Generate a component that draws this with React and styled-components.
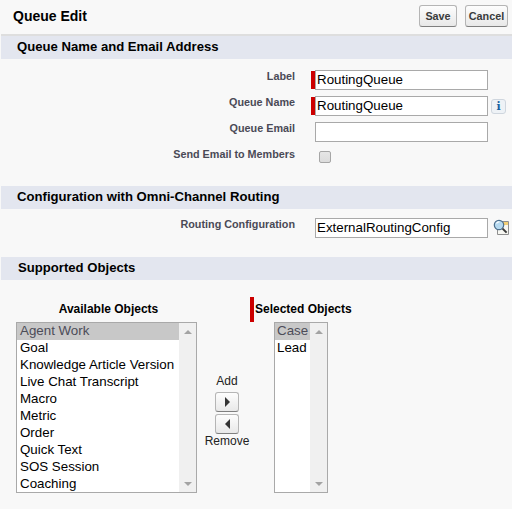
import React from "react";
import styled, { createGlobalStyle } from "styled-components";

const Global = createGlobalStyle`
  html, body { margin: 0; padding: 0; background: #f8f8f8; }
  body { font-family: "Liberation Sans", Arial, sans-serif; }
`;

const Page = styled.div`
  width: 512px;
  height: 509px;
  overflow: hidden;
  box-sizing: border-box;
  padding-left: 1px;
  background: #f8f8f8;
  color: #000;
`;

const TopBar = styled.div`
  height: 34px;
  box-sizing: border-box;
  display: flex;
  align-items: center;
  justify-content: space-between;
  padding: 0 4px 2px 12px;
`;

const Title = styled.h1`
  margin: 0;
  font-size: 14px;
  font-weight: 700;
`;

const Buttons = styled.div`
  display: flex;
  gap: 8px;
`;

const Button = styled.button`
  height: 22px;
  width: ${(p) => p.$w}px;
  box-sizing: border-box;
  padding: 0;
  border: 1px solid #b5b5b5;
  border-bottom-color: #7f7f7f;
  border-radius: 3px;
  background: linear-gradient(#fdfdfd, #e8e8e8);
  font: 700 10.8px "Liberation Sans", Arial, sans-serif;
  color: #3a3b3c;
`;

const Rule = styled.div`
  height: 2px;
  background: #dedede;
`;

const SectionHead = styled.h2`
  margin: 0;
  height: 23px;
  line-height: 22px;
  padding-left: ${(p) => p.$pad || 16}px;
  background: #e3e6ef;
  font-size: 13.13px;
  font-weight: 700;
`;

const Form = styled.div`
  display: grid;
  grid-template-columns: 294px 1fr;
  row-gap: 6px;
  padding: ${(p) => p.$pad};
`;

const Label = styled.label`
  text-align: right;
  font-size: 10.8px;
  font-weight: 700;
  line-height: 12px;
  color: #4a4a56;
`;

const Field = styled.div`
  display: flex;
  align-items: flex-start;
  padding-left: ${(p) => (p.$required ? 16 : 20)}px;
`;

const RequiredBar = styled.span`
  flex: none;
  width: 4px;
  height: 18px;
  margin-top: 1px;
  background: #c00;
`;

const Input = styled.div`
  width: 173px;
  height: 20px;
  box-sizing: border-box;
  border: 1px solid #a9a9a9;
  background: #fff;
  padding-left: 1px;
  font-size: 13.33px;
  line-height: 18px;
  color: #000;
`;

const InfoButton = styled.span`
  width: 15px;
  height: 15px;
  box-sizing: border-box;
  margin: 3px 0 0 3px;
  display: flex;
  align-items: center;
  justify-content: center;
  border: 1px solid #cfd6de;
  border-radius: 3px;
  background: #eef2f6;
  color: #15609f;
  font: 700 11px "DejaVu Serif", serif;
`;

const Check = styled.span`
  width: 12px;
  height: 12px;
  box-sizing: border-box;
  margin: 3px 0 0 4px;
  border: 1px solid #a6a6a6;
  border-radius: 2px;
  background: linear-gradient(#e6e6e6, #dcdcdc);
`;

const Lookup = styled.svg`
  width: 17px;
  height: 16px;
  margin: 1px 0 0 5px;
  flex: none;
`;

const Objects = styled.div`
  display: flex;
  align-items: flex-start;
  padding: 17px 0 0 15px;
`;

const Column = styled.div`
  display: flex;
  flex-direction: column;
`;

const ColHead = styled.div`
  height: 25px;
  box-sizing: border-box;
  font-size: 12px;
  font-weight: 700;
  line-height: 24px;
  padding-left: 4px;
  text-align: center;
`;

const SelectedHead = styled(ColHead)`
  width: 110px;
  margin-left: -24px;
  padding-left: 1px;
  border-left: 4px solid #c00;
  text-align: left;
`;

const ListBox = styled.div`
  width: ${(p) => p.$w}px;
  height: 171px;
  box-sizing: border-box;
  border: 1px solid #a9a9a9;
  background: #fff;
  display: flex;
`;

const Options = styled.div`
  flex: 1;
  min-width: 0;
`;

const Option = styled.div`
  height: 17px;
  line-height: 16px;
  padding-left: ${(p) => p.$inset}px;
  font-size: 13.33px;
  white-space: nowrap;
  background: ${(p) => (p.$selected ? "#c8c8c8" : "transparent")};
  color: ${(p) => (p.$selected ? "#4c4c58" : "#000")};
`;

const ScrollTrack = styled.div`
  flex: none;
  width: 17px;
  box-sizing: border-box;
  background: #f0f0f0;
  display: flex;
  flex-direction: column;
  justify-content: space-between;
  align-items: center;
  padding: 7px 0 6px;
`;

const Arrow = styled.span`
  width: 0;
  height: 0;
  border-left: 4px solid transparent;
  border-right: 4px solid transparent;
  ${(p) => (p.$up ? "border-bottom" : "border-top")}: 4px solid #a3a3a3;
`;

const Mover = styled.div`
  width: 60px;
  margin-right: 17px;
  display: flex;
  flex-direction: column;
  align-items: center;
  padding-top: 77px;
  font-size: 12px;
  line-height: 14px;
  color: #222;
`;

const AddLabel = styled.span`
  padding-bottom: 4px;
`;

const MoveButtons = styled.div`
  display: flex;
  flex-direction: column;
  gap: 2px;
`;

const MoveButton = styled.span`
  width: 24px;
  height: 20px;
  box-sizing: border-box;
  display: flex;
  align-items: center;
  justify-content: center;
  border: 1px solid #b5b5b5;
  border-bottom-color: #7f7f7f;
  border-radius: 3px;
  background: linear-gradient(#fdfdfd, #e8e8e8);
`;

const MoveArrow = styled.span`
  width: 0;
  height: 0;
  border-top: 5px solid transparent;
  border-bottom: 5px solid transparent;
  ${(p) => (p.$left ? "border-right" : "border-left")}: 5px solid #333;
`;

const available = [
  "Agent Work", "Goal", "Knowledge Article Version", "Live Chat Transcript", "Macro",
  "Metric", "Order", "Quick Text", "SOS Session", "Coaching",
];

const List = ({ items, w, inset }) => (
  <ListBox $w={w}>
    <Options>
      {items.map((t, i) => (
        <Option key={t} $selected={i === 0} $inset={inset}>{t}</Option>
      ))}
    </Options>
    <ScrollTrack>
      <Arrow $up />
      <Arrow />
    </ScrollTrack>
  </ListBox>
);

export default function App() {
  return (
    <Page>
      <Global />
      <TopBar>
        <Title>Queue Edit</Title>
        <Buttons>
          <Button $w={38}>Save</Button>
          <Button $w={43}>Cancel</Button>
        </Buttons>
      </TopBar>
      <Rule />
      <SectionHead>Queue Name and Email Address</SectionHead>
      <Form $pad="11px 0 23px">
        <Label>Label</Label>
        <Field $required><RequiredBar /><Input>RoutingQueue</Input></Field>
        <Label>Queue Name</Label>
        <Field $required>
          <RequiredBar /><Input>RoutingQueue</Input><InfoButton>i</InfoButton>
        </Field>
        <Label>Queue Email</Label>
        <Field><Input /></Field>
        <Label>Send Email to Members</Label>
        <Field><Check /></Field>
      </Form>
      <SectionHead>Configuration with Omni-Channel Routing</SectionHead>
      <Form $pad="9px 0 19px">
        <Label>Routing Configuration</Label>
        <Field>
          <Input>ExternalRoutingConfig</Input>
          <Lookup viewBox="0 0 17 16">
            <path d="M4.5 2.5h11v13h-11z" fill="#f7f7f2" stroke="#8f8f8f" />
            <path d="M10 3h5v3h-5z" fill="#f2cf76" />
            <circle cx="6" cy="6" r="4.7" fill="#b5d9f0" stroke="#4d6f8c" strokeWidth="1.2" />
            <path d="M3.5 4.5a3 3 0 0 1 3-1.5" fill="none" stroke="#fff" strokeWidth="1.2" />
            <path d="M9.6 9.6l4 4" stroke="#3a3a3a" strokeWidth="2" />
          </Lookup>
        </Field>
      </Form>
      <SectionHead $pad={17}>Supported Objects</SectionHead>
      <Objects>
        <Column>
          <ColHead>Available Objects</ColHead>
          <List items={available} w={181} inset={3} />
        </Column>
        <Mover>
          <AddLabel>Add</AddLabel>
          <MoveButtons>
            <MoveButton><MoveArrow /></MoveButton>
            <MoveButton><MoveArrow $left /></MoveButton>
          </MoveButtons>
          <span>Remove</span>
        </Mover>
        <Column>
          <SelectedHead>Selected Objects</SelectedHead>
          <List items={["Case", "Lead"]} w={54} inset={2} />
        </Column>
      </Objects>
    </Page>
  );
}
